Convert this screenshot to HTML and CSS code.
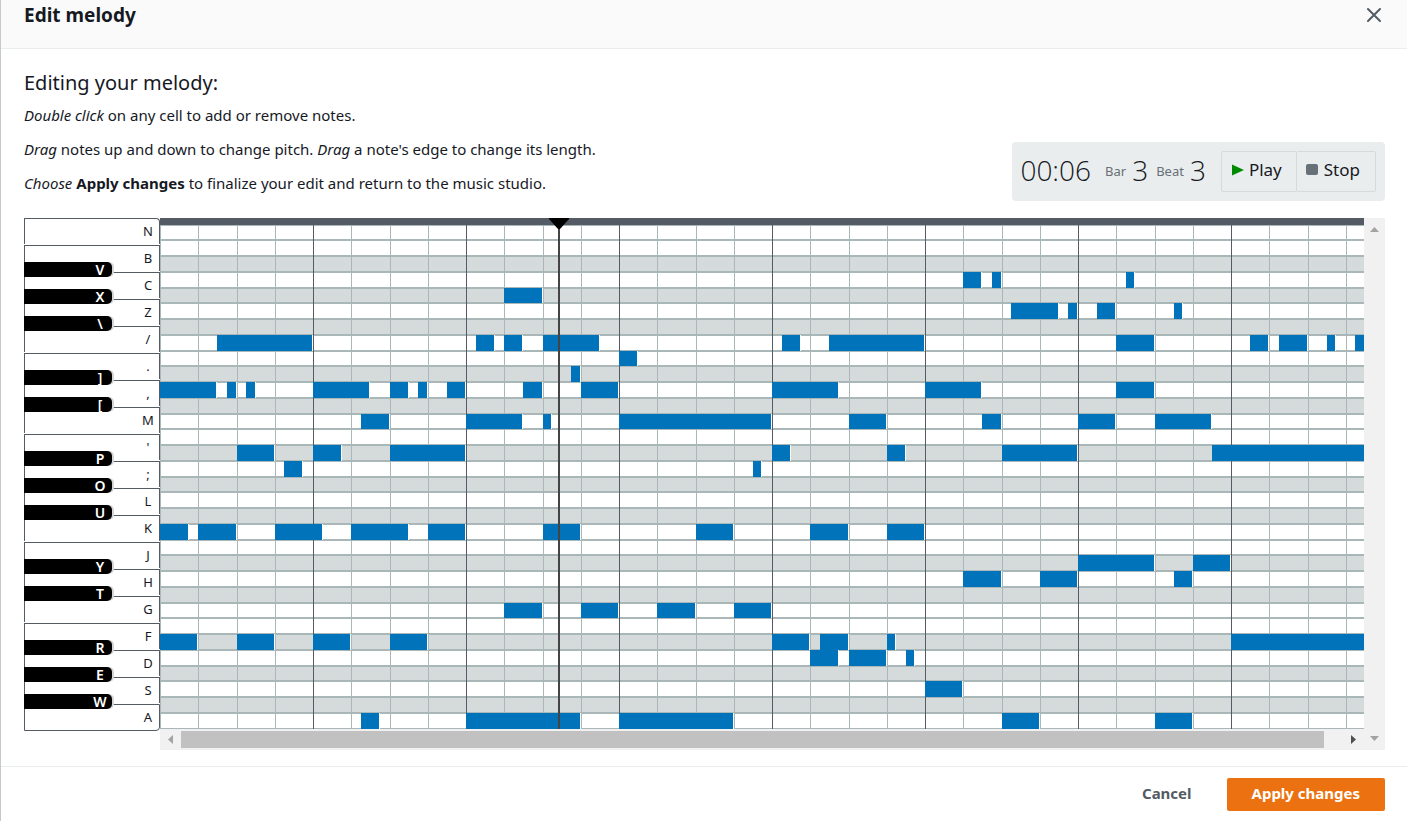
FILE: index.html
```html
<!DOCTYPE html>
<html lang="en">
<head>
<meta charset="utf-8">
<title>Edit melody</title>
<link rel="stylesheet" href="styles.css">
</head>
<body>
<div class="modal" role="dialog" aria-labelledby="title">
  <header class="modal-header">
    <h1 class="modal-title" id="title">Edit melody</h1>
    <button class="close" type="button" aria-label="Close">
      <svg width="16" height="16" viewBox="0 0 16 16" fill="none" stroke="#545b64" stroke-width="2" stroke-linecap="round"><path d="M2 2l12 12M14 2L2 14"/></svg>
    </button>
  </header>
  <main class="modal-body">
    <section class="intro">
      <div class="help">
        <h2 class="help-title">Editing your melody:</h2>
        <p><em>Double click</em> on any cell to add or remove notes.</p>
        <p><em>Drag</em> notes up and down to change pitch. <em>Drag</em> a note's edge to change its length.</p>
        <p><em>Choose</em> <strong>Apply changes</strong> to finalize your edit and return to the music studio.</p>
      </div>
      <div class="player">
        <span class="count time">00:06</span>
        <span class="unit">Bar</span><span class="count">3</span>
        <span class="unit">Beat</span><span class="count">3</span>
        <div class="transport">
          <button type="button"><svg width="12" height="12" viewBox="0 0 12 12"><path d="M0 0.500L12 6L0 11.500z" fill="#008a00"/></svg>Play</button>
          <button type="button"><svg width="12" height="12" viewBox="0 0 12 12"><rect width="12" height="11" rx="2" fill="#687078"/></svg>Stop</button>
        </div>
      </div>
    </section>
    <section class="editor">
      <div class="keys" id="keys"></div>
      <div class="viewport">
        <div class="ruler"></div>
        <div class="roll" id="roll">
          <div class="playhead"><svg width="20" height="11" viewBox="0 0 20 11"><path d="M0 0h20v1L11 11H9L0 1z"/></svg></div>
        </div>
      </div>
      <div class="vbar">
        <svg width="9" height="5" viewBox="0 0 9 5"><path d="M0 5L4.500 0L9 5z"/></svg>
        <svg width="9" height="5" viewBox="0 0 9 5"><path d="M0 0h9L4.500 5z"/></svg>
      </div>
      <div class="hbar">
        <svg width="5" height="9" viewBox="0 0 5 9"><path d="M5 0v9L0 4.500z"/></svg>
        <div class="thumb"></div>
        <svg class="active" width="5" height="9" viewBox="0 0 5 9"><path d="M0 0v9L5 4.500z"/></svg>
      </div>
    </section>
  </main>
  <footer class="modal-footer">
    <button class="btn" type="button">Cancel</button>
    <button class="btn primary" type="button">Apply changes</button>
  </footer>
</div>
<script src="script.js"></script>
</body>
</html>
```
FILE: styles.css
```css
* { box-sizing: border-box; }
body {
  margin: 0;
  font-family: "Noto Sans", "Open Sans", sans-serif;
  font-size: 15px;
  line-height: 24px;
  color: #16191f;
  background: #fff;
}
button { font: inherit; color: inherit; margin: 0; padding: 0; border: 0; background: none; cursor: pointer; }
.modal { border-left: 1px solid #c5cbcd; min-height: 100vh; }
.modal-header {
  display: flex;
  align-items: flex-start;
  justify-content: space-between;
  height: 49px;
  padding: 3px 24px 0 23px;
  background: #fafafa;
  border-bottom: 1px solid #eaeded;
}
.modal-title { margin: 0; font-size: 19px; line-height: 24px; font-weight: 700; }
.close { display: flex; padding: 4px 1px; }
.modal-body { padding: 22px 22px 16px 23px; }
.intro { display: flex; justify-content: space-between; align-items: flex-end; }
.help-title { margin: 0; font-size: 20px; line-height: 24px; font-weight: 400; }
.help p { margin: 0 0 10px; }
.help .help-title { margin-bottom: 8px; }
.player {
  display: flex;
  align-items: center;
  height: 59px;
  margin-bottom: 4px;
  padding: 0 9px 0 8px;
  border-radius: 4px;
  background: #eaeded;
}
.count { padding-bottom: 4px; font-family: "Open Sans", sans-serif; font-weight: 300; font-size: 28px; line-height: 36px; }
.time { margin-right: 14px; }
.unit { margin-right: 6px; font-size: 13px; color: #687078; }
.count + .unit { margin-left: 8px; }
.time + .unit { margin-left: 0; }
.unit { padding-bottom: 1px; }
.transport { display: flex; margin-left: 15px; }
.transport button {
  display: flex;
  align-items: center;
  gap: 5px;
  height: 41px;
  padding: 0 14px 3px 10px;
  border: 1px solid #d5dbdb;
  border-radius: 2px;
  font-size: 17px;
}
.transport button + button { margin-left: -1px; padding: 0 15px 3px 9px; gap: 6px; }
.editor {
  display: grid;
  grid-template-columns: 136px minmax(0, 1fr) 21px;
  grid-template-rows: 511px 21px;
  margin-top: 13px;
}
.keys { grid-row: 1 / 3; display: flex; flex-direction: column; gap: 1px; }
.key {
  position: relative;
  height: 26px;
  padding-right: 4px;
  text-align: right;
  border: solid #545b64;
  border-width: 1px 1px 0 1px;
  font-size: 13px;
  line-height: 24px;
}
.key span { display: inline-block; width: 14px; text-align: center; }
.key:first-child { border-top-right-radius: 4px; }
.key:last-child { height: 27px; border-bottom-width: 1px; border-bottom-right-radius: 4px; }
.sharp {
  position: absolute;
  z-index: 1;
  left: -1px;
  top: 16px;
  width: 88px;
  height: 15px;
  padding-right: 5px;
  text-align: right;
  border-radius: 0 5px 5px 0;
  background: #000;
  box-shadow: 2px 0 0 #d5d5d5;
  color: #fff;
  font-size: 14px;
  line-height: 15px;
  font-weight: 600;
}
.viewport { overflow: hidden; }
.ruler { height: 7px; background: #545b64; }
.roll {
  position: relative;
  display: grid;
  width: 1224px;
  grid-template-rows: repeat(8, 15px 16px 16px 16px);
}
/* beat lines, then bar lines */
.roll::before, .roll::after { content: ""; position: absolute; inset: 0; pointer-events: none; }
.roll::before {
  background: repeating-linear-gradient(90deg,
    #aab7b8 0 1px, transparent 1px 38px,
    #aab7b8 38px 39px, transparent 39px 77px,
    #aab7b8 77px 78px, transparent 78px 115px,
    #aab7b8 115px 116px, transparent 116px 153px);
}
.roll::after { left: 153px; background: repeating-linear-gradient(90deg, #545b64 0 1px, transparent 1px 153px); }
.row { display: grid; grid-template-columns: repeat(128, 1fr); box-shadow: inset 0 1px #aab7b8, inset 0 -1px #aab7b8; }
.row.dark { background: #d5dbdb; }
.note { z-index: 1; grid-row: 1; background: #0073bb; border-right: 1px solid #fff; }
.playhead { position: absolute; z-index: 2; left: 398px; top: 0; bottom: 0; width: 2px; background: #444; }
.playhead svg { position: absolute; left: -9px; top: -7px; }
.viewport { position: relative; }
.vbar { grid-row: 1 / 3; grid-column: 3; display: flex; flex-direction: column; justify-content: space-between; align-items: center; padding: 9px 0; background: #f1f1f1; fill: #a3a3a3; }
.hbar { display: flex; align-items: center; gap: 8px; padding: 0 8px; background: #f1f1f1; fill: #a3a3a3; }
.thumb { flex: 1; height: 17px; margin-right: 19px; background: #c1c1c1; }
.active { fill: #505050; }
.modal-footer {
  display: flex;
  justify-content: flex-end;
  gap: 35px;
  padding: 11px 22px 10px;
  border-top: 1px solid #eaeded;
}
.btn { height: 33px; border-radius: 2px; font-size: 15px; font-weight: 700; color: #545b64; padding: 0 0 4px; }
.primary { padding: 0 25px 4px; background: #ec7211; color: #fff; }
```
FILE: script.js
```js
// White key label, followed by the label of the black key below it.
const keys = [
  ["N"], ["B", "V"], ["C", "X"], ["Z", "\\"], ["/"], [".", "]"], [",", "["], ["M"],
  ["'", "P"], [";", "O"], ["L", "U"], ["K"], ["J", "Y"], ["H", "T"], ["G"],
  ["F", "R"], ["D", "E"], ["S", "W"], ["A"]
];

const darkRows = [2, 4, 6, 9, 11, 14, 16, 18, 21, 23, 26, 28, 30];

// Row index -> [start, length] in quarter beats.
const notes = {
  3: [[84, 2], [87, 1], [101, 1]],
  4: [[36, 4]],
  5: [[89, 5], [95, 1], [98, 2], [106, 1]],
  7: [[6, 10], [33, 2], [36, 2], [40, 6], [65, 2], [70, 10], [100, 4], [114, 2], [117, 3], [122, 1], [125, 3]],
  8: [[48, 2]],
  9: [[43, 1]],
  10: [[0, 6], [7, 1], [9, 1], [16, 6], [24, 2], [27, 1], [30, 2], [38, 2], [44, 4], [64, 7], [80, 6], [100, 4]],
  12: [[21, 3], [32, 6], [40, 1], [48, 16], [72, 4], [86, 2], [96, 4], [104, 6]],
  14: [[8, 4], [16, 3], [24, 8], [64, 2], [76, 2], [88, 8], [110, 18]],
  15: [[13, 2], [62, 1]],
  19: [[0, 3], [4, 4], [12, 5], [20, 6], [28, 4], [40, 4], [56, 4], [68, 4], [76, 4]],
  21: [[96, 8], [108, 4]],
  22: [[84, 4], [92, 4], [106, 2]],
  24: [[36, 4], [44, 4], [52, 4], [60, 4]],
  26: [[0, 4], [8, 4], [16, 4], [24, 4], [64, 4], [69, 3], [76, 1], [112, 16]],
  27: [[68, 3], [72, 4], [78, 1]],
  29: [[80, 4]],
  31: [[21, 2], [32, 12], [48, 12], [88, 4], [104, 4]]
};

const keyboard = document.getElementById("keys");
for (const [white, black] of keys) {
  const key = document.createElement("div");
  key.className = "key";
  const label = document.createElement("span");
  label.textContent = white;
  key.append(label);
  if (black) {
    const sharp = document.createElement("button");
    sharp.type = "button";
    sharp.className = "sharp";
    const text = document.createElement("span");
    text.textContent = black;
    sharp.append(text);
    key.append(sharp);
  }
  keyboard.append(key);
}

const roll = document.getElementById("roll");
for (let i = 0; i < 32; i++) {
  const row = document.createElement("div");
  row.className = darkRows.includes(i) ? "row dark" : "row";
  for (const [start, length] of notes[i] || []) {
    const note = document.createElement("div");
    note.className = "note";
    note.style.gridColumn = `${start + 1} / span ${length}`;
    row.append(note);
  }
  roll.append(row);
}
```
